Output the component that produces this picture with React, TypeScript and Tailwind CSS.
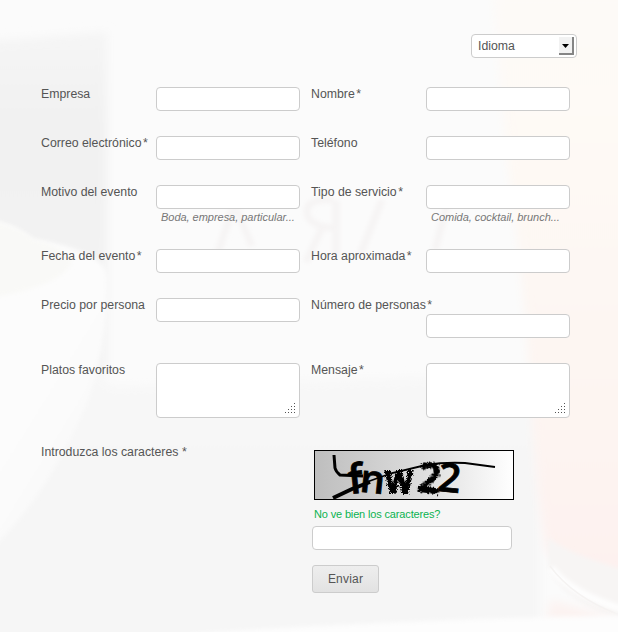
import React from "react";

type FieldProps = {
  label: string;
  required?: boolean;
  hint?: string;
  multiline?: boolean;
  stacked?: boolean;
};

function Label({ text, required, starGap = "ml-px" }: { text: string; required?: boolean; starGap?: string }) {
  return (
    <span className="flex text-[12.3px] leading-[14px] whitespace-nowrap">
      {text}
      {required && <span className={`italic ${starGap}`}>*</span>}
    </span>
  );
}

function Grip() {
  const dots = [[9, 0], [6, 3], [9, 3], [3, 6], [6, 6], [9, 6], [0, 9], [3, 9], [6, 9], [9, 9]];
  return (
    <svg width="10" height="10" className="absolute right-[5px] bottom-[5px]" shapeRendering="crispEdges">
      {dots.map(([x, y]) => (
        <rect key={`${x}-${y}`} x={x} y={y} width="1" height="1" fill="#555" />
      ))}
    </svg>
  );
}

function Field({ label, required, hint, multiline, stacked }: FieldProps) {
  return (
    <div className="flex w-[259px] items-start">
      <label className="w-[115px] shrink-0">
        <Label text={label} required={required} />
      </label>
      <div className={stacked ? "pt-4" : ""}>
        {multiline ? (
          <div className="relative h-[55px] w-36">
            <textarea className="block h-[55px] w-36 resize-none rounded border border-[#ccc] bg-white outline-none" />
            <Grip />
          </div>
        ) : (
          <input className="block h-6 w-36 rounded border border-[#ccc] bg-white px-1.5 outline-none" />
        )}
        {hint && (
          <p className="mt-px ml-[5px] text-[11px] leading-[14px] tracking-[-0.03px] whitespace-nowrap text-[#777] italic">{hint}</p>
        )}
      </div>
    </div>
  );
}

function Backdrop() {
  return (
    <svg className="absolute inset-0 h-full w-full" viewBox="0 0 618 632">
      <defs>
        <filter id="soft" x="-20%" y="-20%" width="140%" height="140%">
          <feGaussianBlur stdDeviation="5" />
        </filter>
        <filter id="edge" x="-10%" y="-10%" width="120%" height="120%">
          <feGaussianBlur stdDeviation="2" />
        </filter>
        <linearGradient id="wall" x2="0" y2="1">
          <stop offset="0" stopColor="#f5f5f5" />
          <stop offset="0.2" stopColor="#f1f1f1" />
          <stop offset="1" stopColor="#f5f5f5" />
        </linearGradient>
        <linearGradient id="table" x2="0" y2="1">
          <stop offset="0" stopColor="#f8f8f8" />
          <stop offset="0.5" stopColor="#f6f6f6" />
          <stop offset="1" stopColor="#f6f6f6" />
        </linearGradient>
        <linearGradient id="glass" x2="0" y2="1">
          <stop offset="0" stopColor="#fdfaf8" />
          <stop offset="0.3" stopColor="#fef9f4" />
          <stop offset="0.5" stopColor="#fdf7f3" />
          <stop offset="1" stopColor="#fdf1ef" />
        </linearGradient>
        <linearGradient id="bowl" x2="0.6" y2="1">
          <stop offset="0" stopColor="#fdfdfd" />
          <stop offset="0.6" stopColor="#fcfcfc" />
          <stop offset="1" stopColor="#f7f7f7" />
        </linearGradient>
      </defs>
      <rect width="618" height="632" fill="#fbfbfb" />
      <path d="M-20 42L107 32V370L-20 500Z" fill="url(#wall)" filter="url(#soft)" />
      <path d="M-20 440L75 350L112 386L540 374V650H-20Z" fill="url(#table)" filter="url(#soft)" />
      <path d="M-20 217L0 222Q20 228 32 239Q102 250 107 275Q110 370 67 445Q35 510-20 560Z" fill="url(#bowl)" filter="url(#edge)" />
      <path d="M-5 222Q22 228 34 240Q65 246 72 263Q60 286-5 297Z" fill="#f9f9f7" filter="url(#edge)" />
      <path d="M492 -10H640V590Q575 582 546 551Q536 500 531 400Q522 260 507 160Z" fill="url(#glass)" filter="url(#soft)" />
      <g fill="none" stroke="#f6f4f4" strokeWidth="7" filter="url(#edge)">
        <path d="M217 255L233 208M236 208L252 246" />
        <path d="M336 200V256M333 200Q306 198 307 213Q309 226 333 228M322 228L306 262" />
        <path d="M360 255L382 200" />
        <path d="M447 205L435 250" />
      </g>
      <path d="M205 290H452" fill="none" stroke="#f8f8f8" strokeWidth="13" strokeDasharray="13 7 8 6" filter="url(#edge)" />
      <path d="M548 537Q565 553 625 570V622Q562 602 548 567Z" fill="#f7f5f4" filter="url(#edge)" />
      <path d="M551 568Q572 595 625 610" fill="none" stroke="#fefefe" strokeWidth="7" filter="url(#edge)" />
      <path d="M550 566Q574 599 625 617" fill="none" stroke="#f5f3f2" strokeWidth="1.5" />
      <path d="M550 600Q570 604 625 622V632H545Z" fill="#fcf3f1" filter="url(#soft)" />
      <path d="M190 634Q400 619 650 615V660H190Z" fill="#fdfdfd" filter="url(#edge)" />
    </svg>
  );
}

function Captcha() {
  return (
    <svg width="200" height="50" viewBox="0 0 200 50" className="block">
      <defs>
        <linearGradient id="captchaBg">
          <stop offset="0" stopColor="#bebebe" />
          <stop offset="0.5" stopColor="#dadada" />
          <stop offset="1" stopColor="#fff" />
        </linearGradient>
        <filter id="rough" x="-20%" y="-20%" width="140%" height="140%">
          <feTurbulence type="fractalNoise" baseFrequency="0.9" numOctaves="1" seed="4" />
          <feDisplacementMap in="SourceGraphic" scale="6" xChannelSelector="R" yChannelSelector="G" />
        </filter>
      </defs>
      <rect x="0.5" y="0.5" width="199" height="49" fill="url(#captchaBg)" stroke="#000" />
      <g fontFamily="Open Sans" fontWeight="600" fill="#000" stroke="#000" strokeWidth="0.8">
        <text x="34" y="43" fontSize="41" transform="rotate(-6 44 28)">f</text>
        <text x="46" y="43" fontSize="39" transform="rotate(6 60 32)">n</text>
        <text x="71" y="43" fontSize="39" strokeWidth="2" textLength="28" lengthAdjust="spacingAndGlyphs" filter="url(#rough)">w</text>
        <text x="104" y="42" fontSize="40" strokeWidth="1.8" transform="rotate(7 114 29)" filter="url(#rough)">2</text>
        <text x="124" y="42" fontSize="40" transform="rotate(6 136 29)">2</text>
      </g>
      <path d="M20 5L21 18Q22 22 26 25L49 26" fill="none" stroke="#000" strokeWidth="3" />
      <path d="M19 48L38 39L56 32" fill="none" stroke="#000" strokeWidth="4" />
      <path d="M50 33L78 23L112 15Q130 12 151 13L181 17" fill="none" stroke="#000" strokeWidth="1.8" />
    </svg>
  );
}

export default function App() {
  return (
    <div className="relative h-[632px] w-[618px] overflow-hidden font-['Liberation_Sans',sans-serif] text-xs text-[#555]">
      <Backdrop />
      <form className="relative pt-[34px] pl-[41px]">
        <div className="ml-[430px] flex h-6 w-[106px] items-center justify-between rounded border border-[#ccc] bg-white pr-0.5 pl-1.5">
          <span className="text-[12.3px]">Idioma</span>
          <span className="flex h-[18px] w-[15px] items-center justify-center border-r-2 border-b-2 border-[#858585] bg-[#f2f2f2] pt-px">
            <svg width="7" height="4"><path d="M0 0H7L3.5 4Z" fill="#000" /></svg>
          </span>
        </div>

        <div className="mt-[29px] grid grid-cols-[259px_259px] grid-rows-[49px_49px_64px_49px_65px_79px] gap-x-[11px]">
          <Field label="Empresa" />
          <Field label="Nombre" required />
          <Field label="Correo electrónico" required />
          <Field label="Teléfono" />
          <Field label="Motivo del evento" hint="Boda, empresa, particular..." />
          <Field label="Tipo de servicio" required hint="Comida, cocktail, brunch..." />
          <Field label="Fecha del evento" required />
          <Field label="Hora aproximada" required />
          <Field label="Precio por persona" />
          <Field label="Número de personas" required stacked />
          <Field label="Platos favoritos" multiline />
          <Field label="Mensaje" required multiline />
        </div>

        <div className="flex items-start pt-[3px]">
          <div className="w-[271px]">
            <Label text="Introduzca los caracteres" required starGap="ml-[3px]" />
          </div>
          <div className="pt-[5px]">
            <div className="pl-0.5">
              <Captcha />
              <a href="#" className="block h-[26px] pt-[7px] text-[11px] leading-[14px] tracking-[-0.15px] text-[#0bb350]">
                No ve bien los caracteres?
              </a>
            </div>
            <input className="block h-6 w-[200px] rounded border border-[#ccc] bg-white px-1.5 outline-none" />
            <button type="button" className="mt-[15px] block h-7 w-[67px] rounded-[3px] border border-[#ccc] bg-linear-to-b from-[#eee] to-[#e2e2e2] tracking-[0.2px] text-[#555]">
              Enviar
            </button>
          </div>
        </div>
      </form>
    </div>
  );
}
